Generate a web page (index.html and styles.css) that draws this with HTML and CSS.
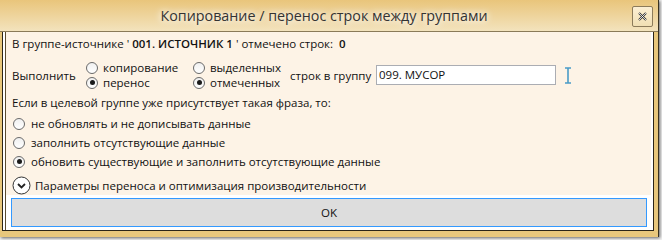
FILE: index.html
```html
<!DOCTYPE html>
<html lang="ru">
  <head>
    <meta charset="UTF-8" />
    <title>Копирование / перенос строк между группами</title>
    <link rel="stylesheet" href="styles.css">
  </head>
  <body>
    <div class="window">
      <div class="titlebar">
        <span class="title">Копирование / перенос строк между группами</span>
        <div class="close-btn">
          <svg width="9" height="9" viewBox="0 0 9 9">
            <path d="M1 1 L8 8 M8 1 L1 8" stroke="#333" stroke-width="2" />
            <path d="M1 1 L8 8 M8 1 L1 8" stroke="#fff" stroke-width="0.8" />
          </svg>
        </div>
      </div>
      <div class="frame">
        <div class="client">
          <div class="content">
            <div class="line">
              В группе-источнике ' <b>001. ИСТОЧНИК 1</b> ' отмечено строк:&nbsp; <b>0</b>
            </div>

            <div class="run-row">
              <span class="run-label">Выполнить</span>
              <div class="radio-col">
                <label class="radio"><span class="dot"></span>копирование</label>
                <label class="radio"><span class="dot checked"></span>перенос</label>
              </div>
              <div class="radio-col second">
                <label class="radio"><span class="dot"></span>выделенных</label>
                <label class="radio"><span class="dot checked"></span>отмеченных</label>
              </div>
              <span class="to-group">строк в группу</span>
              <div class="input">099. МУСОР</div>
              <svg class="ibeam" width="8" height="17" viewBox="0 0 8 17">
                <path d="M1 1 H7 M1 16 H7 M4 1 V16" stroke="#4a9cc8" stroke-width="1.6" fill="none" />
              </svg>
            </div>

            <div class="line question">Если в целевой группе уже присутствует такая фраза, то:</div>
            <div class="options">
              <label class="radio"><span class="dot"></span>не обновлять и не дописывать данные</label>
              <label class="radio"><span class="dot"></span>заполнить отсутствующие данные</label>
              <label class="radio"><span class="dot checked"></span>обновить существующие и заполнить отсутствующие данные</label>
            </div>

            <div class="expander">
              <span class="exp-icon">
                <svg width="19" height="19" viewBox="0 0 19 19">
                  <circle cx="9.5" cy="9.5" r="8.5" fill="#fff" stroke="#333" stroke-width="1" />
                  <path d="M6 8 L9.5 11.5 L13 8" stroke="#222" stroke-width="1.8" fill="none" />
                </svg>
              </span>
              Параметры переноса и оптимизация производительности
            </div>
          </div>
          <div class="footer">
            <div class="ok-btn">OK</div>
          </div>
        </div>
      </div>
    </div>
  </body>
</html>
```

FILE: styles.css
```css
body {
  margin: 0;
  padding: 0;
  width: 662px;
  height: 240px;
  background: #f2f2f2;
  font-family: "Open Sans", "Noto Sans", sans-serif;
  font-size: 11.5px;
  color: #111;
  overflow: hidden;
}

.window {
  width: 659px;
  height: 237px;
  background: #e8c77c;
  border-right: 1px solid #3a3220;
  box-sizing: border-box;
  box-shadow: 1px 1px 3px rgba(0, 0, 0, 0.6);
  display: flex;
  flex-direction: column;
}

.titlebar {
  height: 32px;
  position: relative;
  display: flex;
  align-items: center;
  justify-content: center;
  background: linear-gradient(#e9c57b, #f3e3bd);
  border-bottom: 1px solid #8a7a58;
  box-sizing: border-box;
}

.title {
  font-size: 14.3px;
  color: #333;
  margin-left: -10px;
  text-shadow: 0 0 6px #fff, 0 0 10px #fff;
}

.close-btn {
  position: absolute;
  right: 5px;
  top: 6px;
  width: 19px;
  height: 19px;
  border: 1px solid #8c7b5a;
  border-radius: 2px;
  background: linear-gradient(#fbefd4, #f1dfb3);
  display: flex;
  align-items: center;
  justify-content: center;
}

.frame {
  flex: 1;
  padding: 0 4px 6px 2px;
  display: flex;
}

.client {
  flex: 1;
  border: 1px solid #2a2418;
  border-top: none;
  background: #fff;
  display: flex;
  flex-direction: column;
  padding: 0 2px 0 3px;
  box-sizing: border-box;
  position: relative;
}

.client::before {
  content: "";
  position: absolute;
  top: 0;
  bottom: 0;
  left: 2px;
  border-left: 1px solid #5a4c30;
}

.content {
  background: #fdf3e6;
  padding: 4px 0 0 6px;
  height: 163px;
  box-sizing: border-box;
}

.line {
  height: 16px;
  line-height: 16px;
}

.line b {
  font-weight: 600;
}

.run-row {
  display: flex;
  align-items: center;
  margin-top: 6px;
  height: 34px;
}

.run-label {
  width: 74px;
}

.radio-col {
  display: flex;
  flex-direction: column;
  width: 107px;
}

.radio-col.second {
  width: 97px;
}

.radio {
  display: flex;
  align-items: center;
  height: 15px;
  line-height: 15px;
}

.dot {
  width: 12px;
  height: 12px;
  border: 1px solid #6a6a6a;
  border-radius: 50%;
  background: linear-gradient(#f0f0f0, #fff);
  margin-right: 5px;
  position: relative;
  box-sizing: border-box;
  flex: none;
}

.dot.checked::after {
  content: "";
  position: absolute;
  left: 2.5px;
  top: 2.5px;
  width: 5px;
  height: 5px;
  border-radius: 50%;
  background: #1a1a1a;
}

.to-group {
  width: 86px;
}

.input {
  width: 176px;
  height: 18px;
  line-height: 18px;
  border: 1px solid #abadb3;
  background: #fff;
  padding-left: 2px;
  font-size: 11.5px;
}

.ibeam {
  margin-left: 8px;
}

.question {
  margin-top: 3px;
}

.options {
  padding-left: 1px;
  margin-top: 5px;
  display: flex;
  flex-direction: column;
  gap: 4px;
}

.options .dot {
  margin-right: 6px;
}

.expander {
  display: flex;
  align-items: center;
  margin-top: 6px;
  height: 20px;
}

.exp-icon {
  display: flex;
  margin-right: 4px;
}

.footer {
  flex: 1;
  background: #fff;
  padding: 3px 0 0 5px;
}

.ok-btn {
  border: 1px solid #3399ff;
  background: #dddddd;
  display: flex;
  align-items: center;
  justify-content: center;
  width: 636px;
  height: 29px;
  box-sizing: border-box;
}
```
